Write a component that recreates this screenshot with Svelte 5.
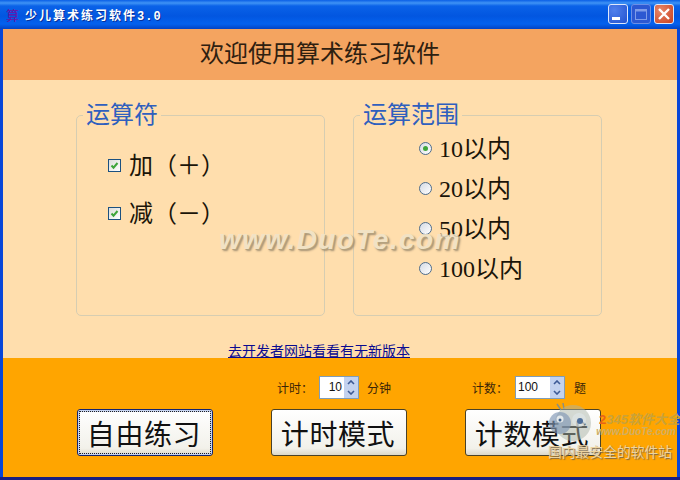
<script>
	const ops = ['加（＋）', '减（－）'];
	const ranges = ['10以内', '20以内', '50以内', '100以内'];
	const modes = ['自由练习', '计时模式', '计数模式'];
</script>

<div class="window">
	<div class="titlebar">
		<span class="app-icon">算</span>
		<span class="title">少儿算术练习软件<span class="ver">3.0</span></span>
		<div class="controls">
			<span class="ctl min"><svg width="20" height="20" viewBox="0 0 20 20"><rect x="4" y="13" width="8" height="3" fill="#fff" /></svg></span>
			<span class="ctl max"><svg width="20" height="20" viewBox="0 0 20 20"><rect x="4.5" y="5.5" width="11" height="10" fill="none" stroke="#7f9ce8" /><rect x="4" y="5" width="12" height="2.5" fill="#7f9ce8" /></svg></span>
			<span class="ctl close"><svg width="20" height="20" viewBox="0 0 20 20"><path d="M5 5l10 10M15 5L5 15" stroke="#fff" stroke-width="2.4" /></svg></span>
		</div>
	</div>

	<div class="client">
		<header class="welcome">欢迎使用算术练习软件</header>

		<main class="options">
			<div class="groups">
				<fieldset class="group">
					<legend>运算符</legend>
					<div class="checks">
						{#each ops as op}
							<label class="item">
								<span class="check">
									<svg width="9" height="9" viewBox="0 0 9 9"><path d="M1.5 4.5l2 2.2L7.5 2" fill="none" stroke="#3fa53a" stroke-width="2" /></svg>
								</span>
								{op}
							</label>
						{/each}
					</div>
				</fieldset>
				<fieldset class="group">
					<legend>运算范围</legend>
					<div class="radios">
						{#each ranges as range, i}
							<label class="item">
								<span class="radio" class:on={i === 0}></span>
								{range}
							</label>
						{/each}
					</div>
				</fieldset>
			</div>
			<a class="update" href="#top">去开发者网站看看有无新版本</a>
		</main>

		<footer class="actions">
			<div class="settings">
				<div class="setting time">
					<span>计时：</span>
					<span class="spin narrow">
						<span class="value">10</span>
						<span class="arrows">
							<span class="arrow"><svg width="8" height="5" viewBox="0 0 8 5"><path d="M1 4l3-3 3 3" fill="none" stroke="#3d5a96" stroke-width="1.6" /></svg></span>
							<span class="arrow"><svg width="8" height="5" viewBox="0 0 8 5"><path d="M1 1l3 3 3-3" fill="none" stroke="#3d5a96" stroke-width="1.6" /></svg></span>
						</span>
					</span>
					<span>分钟</span>
				</div>
				<div class="setting count">
					<span>计数：</span>
					<span class="spin wide">
						<span class="value">100</span>
						<span class="arrows">
							<span class="arrow"><svg width="8" height="5" viewBox="0 0 8 5"><path d="M1 4l3-3 3 3" fill="none" stroke="#3d5a96" stroke-width="1.6" /></svg></span>
							<span class="arrow"><svg width="8" height="5" viewBox="0 0 8 5"><path d="M1 1l3 3 3-3" fill="none" stroke="#3d5a96" stroke-width="1.6" /></svg></span>
						</span>
					</span>
					<span>题</span>
				</div>
			</div>
			<div class="buttons">
				{#each modes as mode, i}
					<button class:focus={i === 0}>{mode}</button>
				{/each}
			</div>
		</footer>
	</div>

	<!-- watermarks stamped over the screenshot -->
	<div class="mark-center">www.DuoTe.com</div>
	<div class="mark-corner">
		<svg class="mascot" width="56" height="42" viewBox="0 0 56 42">
			<path d="M14 3l4 6M20 2l1 6" stroke="#8a8f80" stroke-width="1.5" />
			<circle cx="30" cy="22" r="18" fill="#a9b4a8" opacity="0.5" />
			<circle cx="17" cy="22" r="11" fill="#7f97b5" opacity="0.65" />
			<circle cx="36" cy="19" r="7" fill="#dfe6e8" opacity="0.65" />
			<circle cx="37" cy="20" r="3" fill="#4e6f9a" />
			<circle cx="17" cy="18" r="3.5" fill="#e3e8ea" />
			<circle cx="17" cy="19" r="1.5" fill="#3f5f8a" />
		</svg>
		<div class="mark-brand"><b>2</b><i>345软件大全</i></div>
		<div class="mark-url">www.DuoTe.com</div>
		<div class="mark-slogan">国内最安全的软件站</div>
	</div>
</div>

<style>
	:global(body) {
		margin: 0;
	}

	.window {
		position: relative;
		display: flex;
		flex-direction: column;
		width: 680px;
		height: 480px;
		overflow: hidden;
		box-sizing: border-box;
		font-family: 'Liberation Serif', 'Noto Sans CJK SC', serif;
		color: #1a1408;
		background: linear-gradient(#0846d8 477px, #1a1f80 477px);
	}

	.titlebar {
		display: flex;
		align-items: center;
		flex: none;
		height: 29px;
		box-sizing: border-box;
		padding: 1px 6px 0 6px;
		background: linear-gradient(#0a5fe6 0, #3f93f5 3px, #0a62e8 6px, #0256e0 16px, #0461ee 24px, #0343c4 29px);
	}

	.app-icon {
		width: 14px;
		font: 13px/14px 'Noto Sans CJK SC', sans-serif;
		color: #6a10a8;
	}

	.title {
		margin-left: 5px;
		font: bold 12px 'Noto Sans CJK SC', sans-serif;
		letter-spacing: 2px;
		color: #fff;
		text-shadow: 1px 1px 0 #06309a;
	}

	.ver {
		font-family: 'Liberation Mono', monospace;
		letter-spacing: 1px;
	}

	.controls {
		display: flex;
		gap: 3px;
		margin-left: auto;
		margin-top: -2px;
	}

	.ctl {
		display: block;
		width: 20px;
		height: 20px;
		box-sizing: border-box;
		border: 1px solid #dfe8fb;
		border-radius: 3px;
		background: radial-gradient(circle at 30% 30%, #4f80ec, #2452cf);
	}

	.ctl svg {
		display: block;
		margin: -1px;
	}

	.ctl.max {
		border-color: #6c8fe6;
		background: #2c58d2;
	}

	.ctl.close {
		background: radial-gradient(circle at 30% 30%, #e8876a, #c9401f);
	}

	.client {
		display: flex;
		flex-direction: column;
		flex: 1;
		margin: 0 3px 3px;
	}

	.welcome {
		flex: none;
		height: 51px;
		padding-left: 197px;
		font-size: 24px;
		line-height: 50px;
		background: #f4a460;
		color: #2e2010;
	}

	.options {
		display: flex;
		flex-direction: column;
		flex: none;
		height: 278px;
		box-sizing: border-box;
		padding: 21px 0 0 73px;
		background: #ffdead;
	}

	.groups {
		display: flex;
		gap: 28px;
	}

	.group {
		position: relative;
		width: 249px;
		height: 215px;
		margin: 0;
		padding: 0;
		box-sizing: border-box;
		border: 1px solid #d6cdb2;
		border-radius: 5px;
	}

	legend {
		margin-left: 6px;
		padding: 0 3px;
		font-size: 24px;
		line-height: 28px;
		color: #2f5fbe;
	}

	.item {
		display: flex;
		align-items: center;
		font-size: 24px;
		line-height: 30px;
	}

	.checks {
		display: flex;
		flex-direction: column;
		gap: 18px;
		padding: 22px 0 0 31px;
	}

	.radios {
		display: flex;
		flex-direction: column;
		gap: 10px;
		padding: 5px 0 0 65px;
	}

	.check {
		display: flex;
		align-items: center;
		justify-content: center;
		width: 13px;
		height: 13px;
		box-sizing: border-box;
		margin: -2px 8px 0 0;
		border: 1px solid #1c5180;
		background: linear-gradient(135deg, #dcdcd7, #fff);
	}

	.radio {
		position: relative;
		width: 13px;
		height: 13px;
		box-sizing: border-box;
		margin: -2px 7px 0 0;
		border: 1px solid #4d6c8c;
		border-radius: 50%;
		background: linear-gradient(135deg, #d4dae4, #fff);
	}

	.radio.on::after {
		content: '';
		position: absolute;
		left: 3px;
		top: 3px;
		width: 5px;
		height: 5px;
		border-radius: 50%;
		background: #3fa53a;
	}

	.update {
		align-self: flex-start;
		margin: 26px 0 0 152px;
		font: 14px/17px 'Noto Sans CJK SC', sans-serif;
		color: #0a0a90;
	}

	.actions {
		display: flex;
		flex-direction: column;
		flex: 1;
		background: #ffa500;
	}

	.settings {
		display: flex;
		height: 51px;
		box-sizing: border-box;
		padding: 19px 0 0 274px;
		font: 12px/21px 'Noto Sans CJK SC', sans-serif;
		color: #3a2408;
		white-space: nowrap;
	}

	.setting {
		display: flex;
		align-items: flex-start;
	}

	.time {
		width: 195px;
		gap: 6px;
	}

	.count {
		gap: 7px;
	}

	.setting > span:first-child {
		width: 36px;
	}

	.spin {
		display: flex;
		height: 23px;
		margin: -1px 2px 0 0;
		box-sizing: border-box;
		border: 1px solid #7f9db9;
		background: #fff;
		color: #111;
		font-family: 'Liberation Sans', sans-serif;
	}

	.narrow {
		width: 40px;
	}

	.wide {
		width: 50px;
	}

	.value {
		flex: 1;
		line-height: 21px;
		padding: 0 2px;
	}

	.narrow .value {
		text-align: right;
	}

	.arrows {
		display: flex;
		flex-direction: column;
		width: 14px;
	}

	.arrow {
		display: flex;
		align-items: center;
		justify-content: center;
		flex: 1;
		background: #c3d2ef;
	}

	.buttons {
		display: flex;
		gap: 58px;
		padding-left: 74px;
	}

	button {
		width: 136px;
		height: 47px;
		padding: 0 2px 0 0;
		box-sizing: border-box;
		border: 1px solid #4a4228;
		border-radius: 3px;
		background: linear-gradient(#fff, #f2f1ea 85%, #dcd8c8);
		font: 28px 'Noto Sans CJK SC', sans-serif;
		letter-spacing: 0.6px;
		color: #111;
	}

	button.focus {
		border-color: #14246e;
		outline: 1px dotted #222;
		outline-offset: -3px;
		box-shadow: inset 0 0 0 2px #c6d3f0;
	}

	.mark-center {
		position: absolute;
		left: 219px;
		top: 224px;
		font: italic bold 28px 'Liberation Sans', sans-serif;
		letter-spacing: 1.4px;
		color: #efe3c9;
		text-shadow: 1px 1px 0 #a89878, 2px 2px 2px #94846a;
		opacity: 0.85;
	}

	.mark-corner {
		position: absolute;
		right: 0;
		top: 401px;
		width: 137px;
		height: 60px;
	}

	.mascot {
		position: absolute;
		left: 0;
		top: 0;
	}

	.mark-brand {
		position: absolute;
		right: 0;
		top: 8px;
		font: bold 13px 'Liberation Sans', 'Noto Sans CJK SC', sans-serif;
		white-space: nowrap;
		color: #c9a23a;
	}

	.mark-brand b {
		color: #e8631a;
	}

	.mark-url {
		position: absolute;
		right: 4px;
		top: 25px;
		font: italic bold 10px 'Liberation Sans', sans-serif;
		color: #cfae62;
	}

	.mark-slogan {
		position: absolute;
		left: 5px;
		top: 42px;
		font: 13.8px/16px 'Noto Sans CJK SC', sans-serif;
		white-space: nowrap;
		color: #ecd3a0;
		text-shadow: 1px 1px 1px #7a6646;
	}
</style>
